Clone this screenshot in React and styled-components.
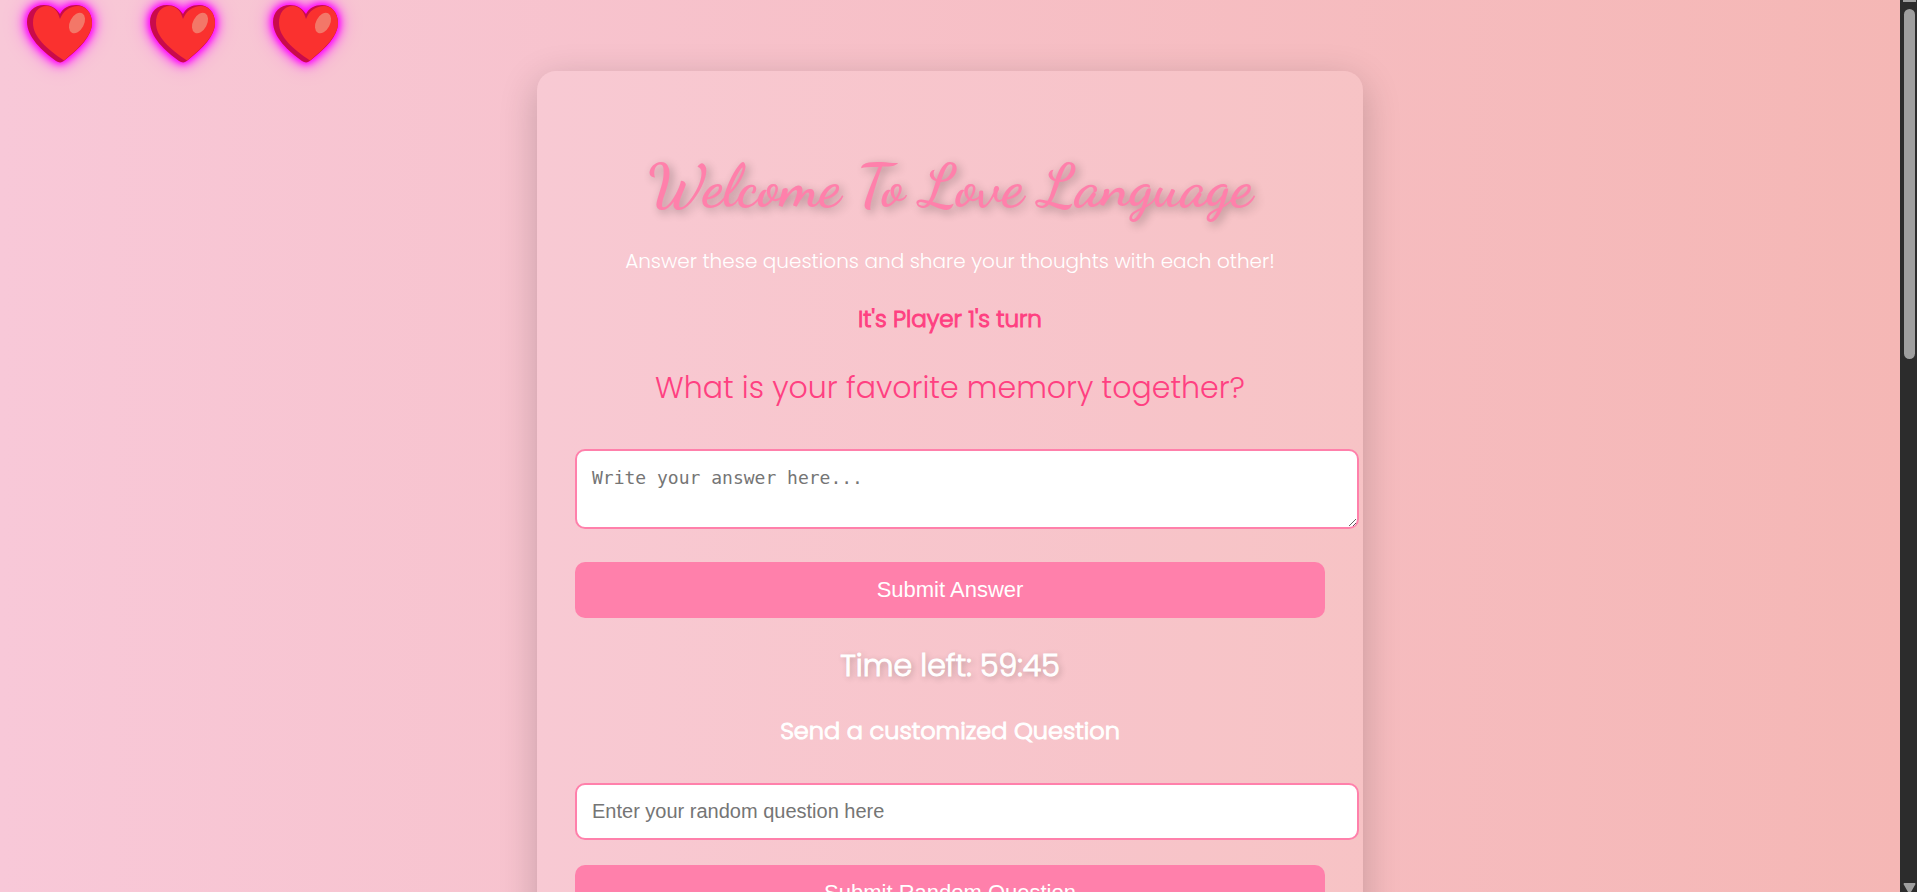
import React from "react";
import styled, { createGlobalStyle } from "styled-components";

const rose = "#ff80ab";
const deepRose = "#ff4081";
const bodyFont = `Poppins, Inter, "Liberation Sans", sans-serif`;

const GlobalStyle = createGlobalStyle`
  body {
    margin: 0;
    overflow: hidden;
    font-family: ${bodyFont};
    color: #fff;
  }
`;

const Window = styled.div`
  display: grid;
  grid-template-columns: minmax(0, 1fr) 17px;
  height: 100vh;
`;

const Page = styled.div`
  position: relative;
  overflow: hidden;
  padding-top: 71px;
  background: linear-gradient(to right, #f8c8d8, #f5b7b5);
`;

const Hearts = styled.div`
  position: absolute;
  top: 5px;
  left: 27px;
  display: flex;
  gap: 58px;
`;

const HeartIcon = styled.svg`
  display: block;
  width: 65px;
  height: 58px;
  overflow: visible;
  filter: drop-shadow(0 0 3px #ff00ff) drop-shadow(0 0 5px #ff00ff) drop-shadow(0 0 8px rgba(255, 0, 255, 0.5));
`;

const Card = styled.main`
  box-sizing: border-box;
  width: 100%;
  max-width: 826px;
  margin: 0 auto;
  padding: 75px 38px 38px;
  border-radius: 19px;
  background: rgba(255, 245, 245, 0.12);
  box-shadow: 0 10px 38px rgba(0, 0, 0, 0.2);
  text-align: center;
`;

const Title = styled.h1`
  margin: 0 0 20px;
  font-family: "Dancing Script", "Liberation Serif", serif;
  font-size: 60px;
  font-weight: 700;
  line-height: 80px;
  color: ${rose};
  text-shadow: 3px 3px 10px rgba(0, 0, 0, 0.3);
`;

const Intro = styled.p`
  margin: 0 0 25px;
  font-size: 20px;
  font-weight: 300;
  line-height: 30px;
`;

const boldStroke = `
  font-weight: 300;
  -webkit-text-stroke: 1px currentColor;
`;

const Turn = styled.p`
  ${boldStroke}
  margin: 0 0 29px;
  font-size: 23px;
  line-height: 36px;
  color: ${deepRose};
`;

const Question = styled.h2`
  margin: 0 0 39px;
  font-size: 30px;
  font-weight: 300;
  line-height: 44px;
  color: ${deepRose};
`;

const fieldStyle = `
  display: block;
  box-sizing: content-box;
  width: 100%;
  padding: 15px;
  border: 2px solid ${rose};
  border-radius: 10px;
  background: #fff;
  color: #333;
  outline: none;
  &::placeholder {
    color: #757575;
    opacity: 1;
  }
`;

const Answer = styled.textarea`
  ${fieldStyle}
  height: 46px;
  margin: 0 0 33px;
  font-family: Consolas, "DejaVu Sans Mono", monospace;
  font-size: 18px;
  line-height: 24px;
  resize: both;
`;

const TextField = styled.input`
  ${fieldStyle}
  height: 23px;
  margin: 0 0 25px;
  font-family: Arial, "Liberation Sans", sans-serif;
  font-size: 20px;
`;

const Button = styled.button`
  display: block;
  width: 100%;
  height: 56px;
  padding: 0;
  border: 0;
  border-radius: 10px;
  background: ${rose};
  color: #fff;
  font-family: Arial, "Liberation Sans", sans-serif;
  font-size: 22px;
  cursor: pointer;
`;

const Timer = styled.p`
  ${boldStroke}
  margin: 26px 0 25px;
  font-size: 30px;
  line-height: 44px;
  text-shadow: 2px 2px 6px rgba(0, 0, 0, 0.3);
`;

const CustomLabel = styled.label`
  ${boldStroke}
  display: block;
  margin: 0 0 34px;
  font-size: 24px;
  line-height: 36px;
`;

const Scrollbar = styled.div`
  display: flex;
  flex-direction: column;
  align-items: center;
  justify-content: space-between;
  overflow: hidden;
  background: #2c2c2c;
`;

const Thumb = styled.div`
  width: 11px;
  height: 350px;
  margin: 7px 0 auto 2px;
  border-radius: 6px;
  background: #9f9f9f;
`;

const ArrowEnd = styled.div`
  width: 13px;
  height: 2px;
  margin-left: 2px;
  background: #9f9f9f;
`;

const ArrowDown = styled.svg`
  display: block;
  width: 13px;
  height: 9px;
  margin-left: 2px;
`;

function Heart() {
  return (
    <HeartIcon viewBox="0 0 65 58" aria-hidden="true">
      <path
        d="M33 9C29 3 24 0 17 0C7 0 0 7 0 17C0 32 15 46 29 56C32 58 35 58 38 55C53 43 65 31 65 18C65 7 58 0 49 0C42 0 36 3 33 9Z"
        fill="#c90b4b"
      />
      <path
        d="M33 14C31 6 26 1 20 1C11 1 6 8 6 18C6 32 20 44 37 55.500C52 43 65 31 65 18C65 8 59 1 51 1C43 1 36 6 33 14Z"
        fill="#fa312f"
      />
      <ellipse cx="50" cy="18" rx="7" ry="11" transform="rotate(28 50 18)" fill="#f37768" />
    </HeartIcon>
  );
}

export default function App() {
  return (
    <>
      <GlobalStyle />
      <Window>
        <Page>
          <Hearts>
            <Heart />
            <Heart />
            <Heart />
          </Hearts>
          <Card>
            <Title>Welcome To Love Language</Title>
            <Intro>Answer these questions and share your thoughts with each other!</Intro>
            <Turn>It's Player 1's turn</Turn>
            <Question id="question">What is your favorite memory together?</Question>
            <Answer aria-labelledby="question" placeholder="Write your answer here..." />
            <Button type="button">Submit Answer</Button>
            <Timer>Time left: 59:45</Timer>
            <CustomLabel htmlFor="custom-question">Send a customized Question</CustomLabel>
            <TextField id="custom-question" type="text" placeholder="Enter your random question here" />
            <Button type="button">Submit Random Question</Button>
          </Card>
        </Page>
        <Scrollbar aria-hidden="true">
          <ArrowEnd />
          <Thumb />
          <ArrowDown viewBox="0 0 13 9">
            <path d="M1 0H12Q13 1 12 2L8 9H5L1 2Q0 1 1 0Z" fill="#9f9f9f" />
          </ArrowDown>
        </Scrollbar>
      </Window>
    </>
  );
}
